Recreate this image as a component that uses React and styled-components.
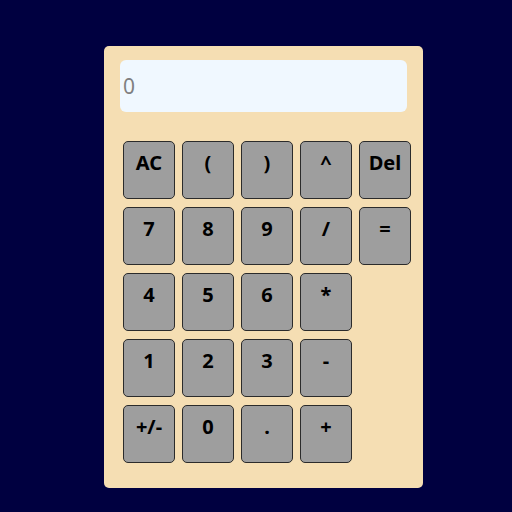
import React from 'react';
import styled, { createGlobalStyle } from 'styled-components';

const GlobalStyle = createGlobalStyle`
	body {
		margin: 0;
		background-color: #000040;
		font-family: "Noto Sans", sans-serif;
	}
`;

const Page = styled.div`
	width: 512px;
	height: 512px;
	padding: 46px 0 0 104px;
	box-sizing: border-box;
`;

const Calculator = styled.div`
	width: 319px;
	height: 442px;
	box-sizing: border-box;
	background-color: wheat;
	border-radius: 5px;
	padding: 14px 16px 0;
`;

const Display = styled.div`
	height: 52px;
	background-color: aliceblue;
	border-radius: 6px;
	display: flex;
	align-items: center;
	padding-left: 3px;
	font-size: 21px;
	color: gray;
`;

const Keys = styled.div`
	display: grid;
	grid-template-columns: repeat(5, 52px);
	grid-auto-rows: 58px;
	column-gap: 7px;
	row-gap: 8px;
	margin: 29px 0 0 3px;
`;

const Key = styled.button`
	box-sizing: border-box;
	background-color: #9e9e9e;
	border: 1px solid #2b2b2b;
	border-radius: 5px;
	color: #000;
	padding: 0 0 14px;
	display: flex;
	align-items: center;
	justify-content: center;
`;

const Label = styled.span`
	font-family: "Noto Sans", sans-serif;
	font-weight: 700;
	font-size: 20px;
	line-height: 1;
`;

const keys = [
	'AC', '(', ')', '^', 'Del',
	'7', '8', '9', '/', '=',
	'4', '5', '6', '*', null,
	'1', '2', '3', '-', null,
	'+/-', '0', '.', '+', null,
];

const App = () => {
	return (
		<Page>
			<GlobalStyle />
			<Calculator>
				<Display>0</Display>
				<Keys>
					{keys.map((k, i) =>
						k ? (
							<Key key={i}>
								<Label>{k}</Label>
							</Key>
						) : (
							<span key={i} />
						)
					)}
				</Keys>
			</Calculator>
		</Page>
	);
};

export default App;
